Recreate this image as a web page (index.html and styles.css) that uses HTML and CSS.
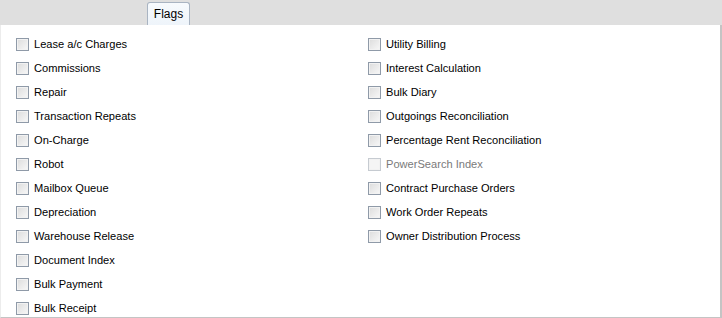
FILE: index.html
```html
<!DOCTYPE html>
<html>
  <head>
    <meta charset="utf-8">
    <title>Flags</title>
    <link rel="stylesheet" href="styles.css">
  </head>
  <body>
    <!-- Barra de pestañas -->
    <div class="tabBar">
      <div class="tab">Flags</div>
    </div>

    <!-- Panel con las opciones -->
    <div class="panel">
      <div class="column">
        <label class="flag"><span class="box"></span>Lease a/c Charges</label>
        <label class="flag"><span class="box"></span>Commissions</label>
        <label class="flag"><span class="box"></span>Repair</label>
        <label class="flag"><span class="box"></span>Transaction Repeats</label>
        <label class="flag"><span class="box"></span>On-Charge</label>
        <label class="flag"><span class="box"></span>Robot</label>
        <label class="flag"><span class="box"></span>Mailbox Queue</label>
        <label class="flag"><span class="box"></span>Depreciation</label>
        <label class="flag"><span class="box"></span>Warehouse Release</label>
        <label class="flag"><span class="box"></span>Document Index</label>
        <label class="flag"><span class="box"></span>Bulk Payment</label>
        <label class="flag"><span class="box"></span>Bulk Receipt</label>
      </div>
      <div class="column">
        <label class="flag"><span class="box"></span>Utility Billing</label>
        <label class="flag"><span class="box"></span>Interest Calculation</label>
        <label class="flag"><span class="box"></span>Bulk Diary</label>
        <label class="flag"><span class="box"></span>Outgoings Reconciliation</label>
        <label class="flag"><span class="box"></span>Percentage Rent Reconciliation</label>
        <label class="flag disabled"><span class="box"></span>PowerSearch Index</label>
        <label class="flag"><span class="box"></span>Contract Purchase Orders</label>
        <label class="flag"><span class="box"></span>Work Order Repeats</label>
        <label class="flag"><span class="box"></span>Owner Distribution Process</label>
      </div>
    </div>
  </body>
</html>
```

FILE: styles.css
```css
body {
  margin: 0;
  font-family: "Liberation Sans", Arial, sans-serif;
  font-size: 11.1px;
  color: #000;
  background: #fff;
  overflow: hidden;
}

.tabBar {
  height: 25px;
  background: #dfdfdf;
  padding-left: 147px;
  display: flex;
  align-items: flex-end;
  box-sizing: border-box;
}

.tab {
  height: 23px;
  width: 43px;
  box-sizing: border-box;
  border: 1px solid #a9b4c2;
  border-bottom: none;
  border-radius: 3px 3px 0 0;
  background: linear-gradient(#f7fafd, #eef4fa);
  text-align: center;
  line-height: 22px;
  font-size: 12px;
}

.panel {
  display: flex;
  height: 293px;
  width: 722px;
  box-sizing: border-box;
  padding: 7px 0 0 15px;
  border-right: 2px solid #c4c4c4;
  border-bottom: 1px solid #c4c4c4;
  border-left: 1px solid #ececec;
  overflow: hidden;
}

.column {
  width: 352px;
  display: flex;
  flex-direction: column;
}

.flag {
  height: 24px;
  flex-shrink: 0;
  display: flex;
  align-items: center;
  gap: 5px;
  white-space: nowrap;
}

.box {
  width: 13px;
  height: 13px;
  box-sizing: border-box;
  border: 1px solid #8f9aa8;
  background: linear-gradient(135deg, #dcdcdc, #f8f8f8);
  box-shadow: inset 0 0 0 1px #f2f2f2;
}

.disabled {
  color: #7a7a7a;
}

.disabled .box {
  border-color: #c6cbd1;
  background: #f5f5f5;
}
```
